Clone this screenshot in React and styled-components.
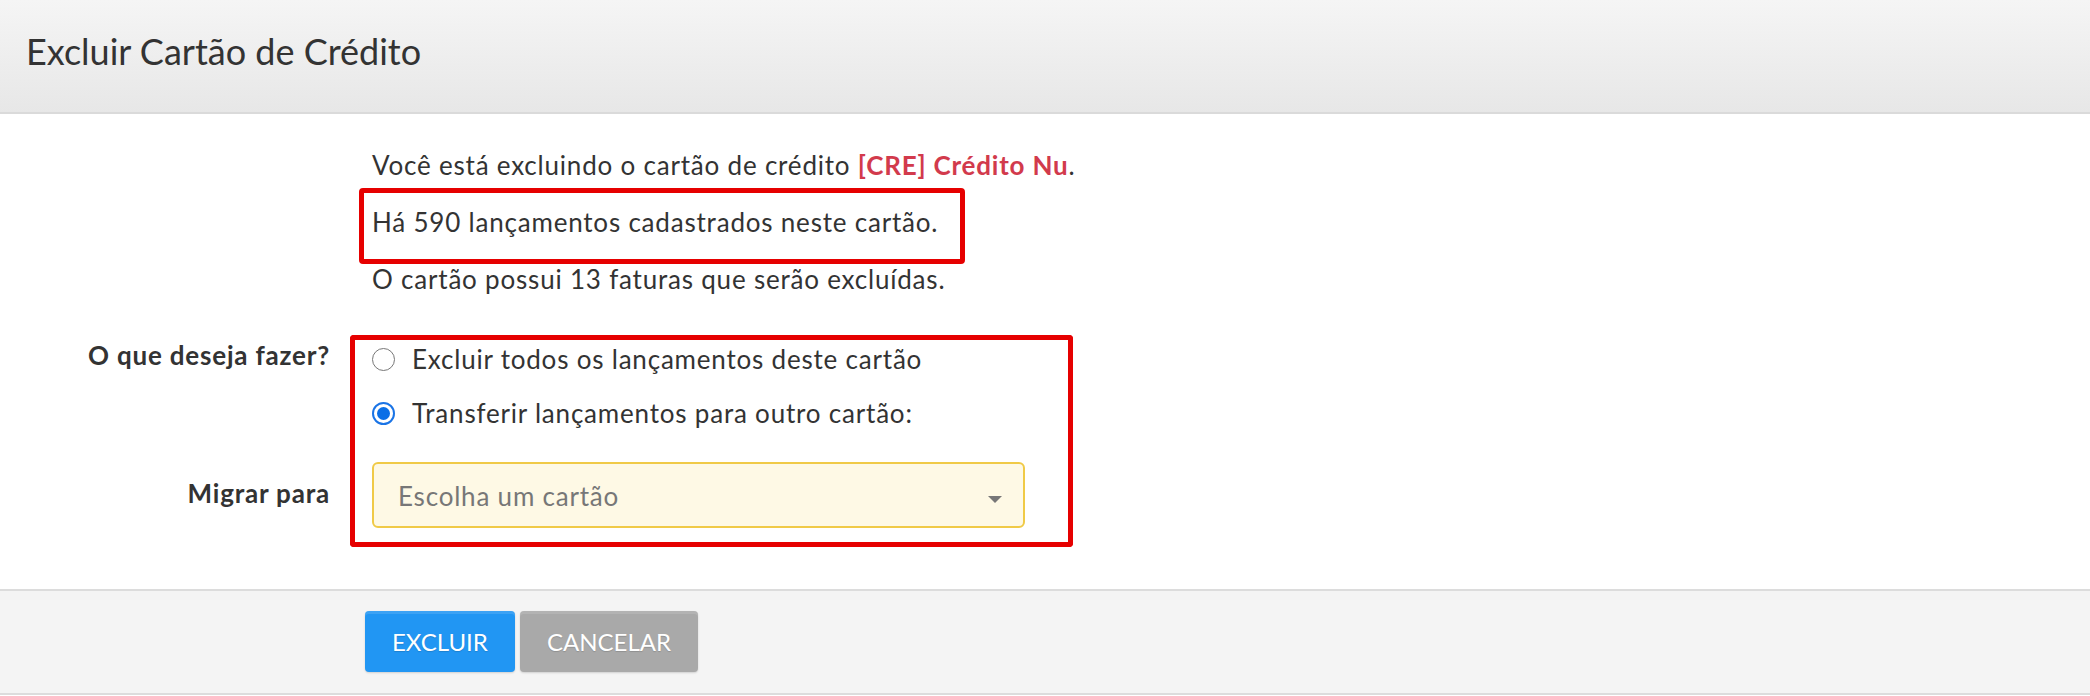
import React from 'react';
import styled, { createGlobalStyle } from 'styled-components';

const GlobalStyle = createGlobalStyle`
  html, body { margin: 0; padding: 0; background: #fff; }
  body { font-family: Lato, "Noto Sans", sans-serif; color: #333; }
  *, *::before, *::after { box-sizing: border-box; }
`;

const Page = styled.div`
  width: 2090px;
  height: 696px;
  display: flex;
  flex-direction: column;
  background: #fff;
  overflow: hidden;
`;

const Header = styled.header`
  height: 114px;
  padding: 29px 0 0 26px;
  background: linear-gradient(#f5f5f5, #e7e7e7);
  border-bottom: 2px solid #dadada;
`;

const Title = styled.h1`
  margin: 0;
  font-size: 36px;
  font-weight: 400;
  line-height: 44px;
  color: #333;
`;

const Body = styled.main`
  padding-top: 34px;
  display: flex;
  flex-direction: column;
`;

const Intro = styled.div`
  padding-left: 372px;
  display: flex;
  flex-direction: column;
  align-items: flex-start;
  font-size: 26px;
  letter-spacing: 0.8px;
  line-height: 34px;
`;

const Line = styled.p`
  margin: ${(p) => p.$mt || 0}px 0 0;
`;

const Strong = styled.strong`
  color: #d23a4c;
  font-weight: 700;
`;

const Callout = styled.div`
  margin: 6px 0 0 -13px;
  border: 5px solid #e60000;
  border-radius: 4px;
  padding: 12px 22px 20px 8px;
`;

const Form = styled.div`
  margin-top: 39px;
  display: flex;
  flex-direction: column;
`;

const FormRow = styled.div`
  display: grid;
  grid-template-columns: 330px 723px;
  column-gap: 20px;
`;

const Label = styled.div`
  text-align: right;
  font-size: 26px;
  letter-spacing: 0.8px;
  font-weight: 700;
  line-height: 34px;
  color: #333;
  padding-top: ${(p) => p.$pt}px;
`;

const HighlightCell = styled.div`
  border: 5px solid #e60000;
  ${(p) =>
    p.$part === 'top'
      ? `border-bottom: none; border-radius: 4px 4px 0 0; padding: 2px 43px 0 17px;`
      : `border-top: none; border-radius: 0 0 4px 4px; padding: 32px 43px 14px 17px;`}
  display: flex;
  flex-direction: column;
  gap: 20px;
`;

const Option = styled.label`
  display: flex;
  align-items: center;
  gap: 17px;
  font-size: 26px;
  letter-spacing: 0.8px;
  line-height: 34px;
  color: #333;
`;

const RadioMark = styled.span`
  width: 23px;
  height: 23px;
  border-radius: 50%;
  flex: none;
  background: #fff;
  border: ${(p) => (p.$checked ? '2px solid #1a74e6' : '1.5px solid #777')};
  display: flex;
  align-items: center;
  justify-content: center;
  &::after {
    content: '';
    width: 13px;
    height: 13px;
    border-radius: 50%;
    background: ${(p) => (p.$checked ? '#0b6fe6' : 'transparent')};
  }
`;

const Select = styled.div`
  width: 653px;
  height: 66px;
  border: 2px solid #f0ca47;
  border-radius: 6px;
  background: #fef9e5;
  display: flex;
  align-items: center;
  justify-content: space-between;
  padding: 2px 21px 0 24px;
  font-size: 26px;
  letter-spacing: 0.8px;
  line-height: 34px;
  color: #777;
`;

const Caret = styled.span`
  width: 0;
  height: 0;
  margin-top: 6px;
  border-left: 7px solid transparent;
  border-right: 7px solid transparent;
  border-top: 7px solid #777;
`;

const Footer = styled.footer`
  margin-top: 42px;
  border-top: 2px solid #dcdcdc;
  border-bottom: 2px solid #dcdcdc;
  background: #f4f4f4;
  padding: 20px 0 21px 365px;
  display: flex;
  gap: 5px;
`;

const Button = styled.button`
  height: 61px;
  padding: 0 27px;
  border: none;
  border-radius: 4px;
  background: ${(p) => (p.$variant === 'primary' ? '#2196f3' : '#a9a9a9')};
  color: #fff;
  font-family: Lato, "Noto Sans", sans-serif;
  font-size: 24px;
  text-transform: uppercase;
  text-shadow: 0 1px 1px rgba(0, 0, 0, 0.15);
  box-shadow: inset 0 3px 0 rgba(255, 255, 255, 0.12), 0 1px 2px rgba(0, 0, 0, 0.15);
  cursor: pointer;
`;

export default function App() {
  return (
    <Page>
      <GlobalStyle />
      <Header>
        <Title>Excluir Cartão de Crédito</Title>
      </Header>
      <Body>
        <Intro>
          <Line>
            Você está excluindo o cartão de crédito <Strong>[CRE] Crédito Nu</Strong>.
          </Line>
          <Callout>
            <Line>Há 590 lançamentos cadastrados neste cartão.</Line>
          </Callout>
          <Line $mt={-2}>O cartão possui 13 faturas que serão excluídas.</Line>
        </Intro>
        <Form>
          <FormRow>
            <Label $pt={3}>O que deseja fazer?</Label>
            <HighlightCell $part="top">
              <Option>
                <RadioMark />
                Excluir todos os lançamentos deste cartão
              </Option>
              <Option>
                <RadioMark $checked />
                Transferir lançamentos para outro cartão:
              </Option>
            </HighlightCell>
          </FormRow>
          <FormRow>
            <Label $pt={46}>Migrar para</Label>
            <HighlightCell $part="bottom">
              <Select>
                <span>Escolha um cartão</span>
                <Caret />
              </Select>
            </HighlightCell>
          </FormRow>
        </Form>
        <Footer>
          <Button $variant="primary">Excluir</Button>
          <Button>Cancelar</Button>
        </Footer>
      </Body>
    </Page>
  );
}
